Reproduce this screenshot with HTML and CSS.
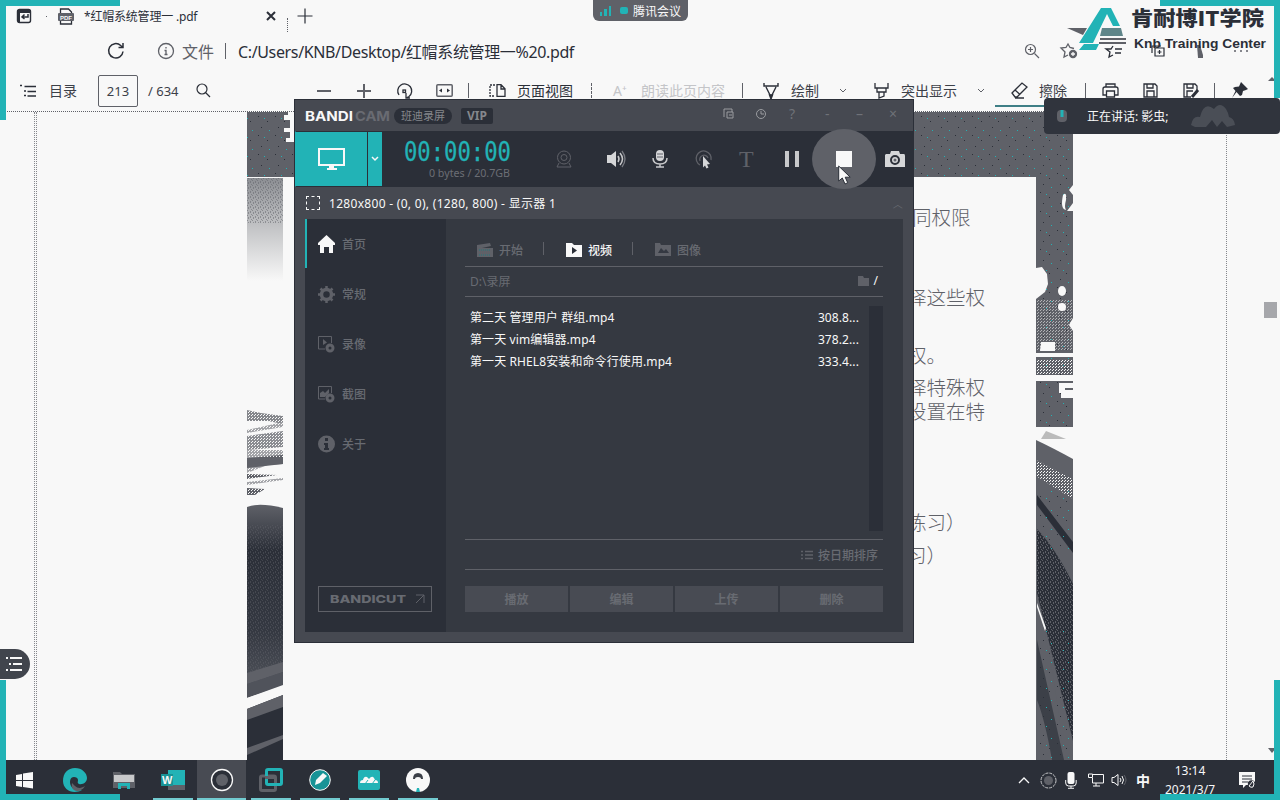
FILE: index.html
```html
<!DOCTYPE html>
<html lang="zh-CN">
<head>
<meta charset="utf-8">
<title>红帽系统管理一 .pdf</title>
<link rel="stylesheet" href="styles.css">
</head>
<body>
<div class="desktop">
  <header class="tabs">
    <svg width="16" height="16" viewBox="0 0 16 16"><rect x="1.500" y="1.500" width="13" height="13" rx="2" fill="none" stroke="#2b2f38" stroke-width="1.400"/><path d="M1 2h14v3H4v10H2z" fill="#2b2f38"/><path d="M12 6v3H6m2.500-2.500L6 9l2.500 2" fill="none" stroke="#2b2f38" stroke-width="1.500"/></svg>
    <i class="speck"></i>
    <svg width="16" height="17" viewBox="0 0 16 17"><path d="M2.500 5V1h8l3 3v1M2.500 13v3h11v-3" fill="none" stroke="#2b2f38" stroke-width="1.300"/><rect y="5" width="16" height="8" rx="1" fill="#5f6168"/><text x="2" y="11.500" class="pdf-tag">PDF</text></svg>
    <span class="tab-title">*红帽系统管理一 .pdf</span>
    <svg width="10" height="10" viewBox="0 0 10 10"><path d="M1 1l8 8M9 1L1 9" stroke="#2b2f38" stroke-width="2"/></svg>
    <i class="tab-edge"></i>
    <svg width="16" height="16" viewBox="0 0 16 16"><path d="M8 .500v15M.500 8h15" stroke="#2b2f38" stroke-width="1.200"/></svg>
  </header>

  <div class="address">
    <svg width="18" height="18" viewBox="0 0 18 18" fill="none" stroke="#2b2f38" stroke-width="1.500"><path d="M16 9.500A7.200 7.200 0 1 1 13.700 3.500L16 5.500M16 1v4.500h-4.500"/></svg>
    <svg width="18" height="18" viewBox="0 0 18 18" fill="none" stroke="#5f6168" stroke-width="1.300"><circle cx="9" cy="9" r="7.500"/><path d="M9 5v1.500M7.500 8.500H9v4m-1.500 0h3"/></svg>
    <span class="scheme">文件</span>
    <i class="bar"></i>
    <span class="url">C:/Users/KNB/Desktop/红帽系统管理一%20.pdf</span>
    <svg width="16" height="16" viewBox="0 0 16 16" fill="none" stroke="#5f6168" stroke-width="1.200"><circle cx="6.500" cy="6.500" r="5"/><path d="M4 6.500h5M6.500 4v5M10.500 10.500L15 15"/></svg>
    <svg width="18" height="16" viewBox="0 0 18 16" fill="none" stroke="#5f6168" stroke-width="1.300"><path d="M8 12l-4 2 1-5-4-4 5-.5L8 1l2 3.500 4 1"/><circle cx="13" cy="11" r="3.500" fill="#5f6168"/><path d="M11 11h4m-2-2v4" stroke="#f8f8f8"/></svg>
    <svg width="18" height="16" viewBox="0 0 18 16" fill="none" stroke="#2b2f38" stroke-width="1.300"><path d="M8 3L6 6 1 6l4 3-1 5 4-2M10 6h7M10 10h6"/></svg>
    <svg width="16" height="16" viewBox="0 0 16 16" fill="none" stroke="#2b2f38" stroke-width="1.200"><path d="M2 10V3h9M5 5h9v8H5zM9.500 7v4M7.500 9h4"/></svg>
    <svg width="10" height="16" viewBox="0 0 10 16"><path d="M2 2h3l3 10v3H3z" fill="#5f6168"/></svg>
    <svg width="16" height="6" viewBox="0 0 16 6" fill="#5f6168"><circle cx="2" cy="3" r="1"/><circle cx="8" cy="3" r="1"/><circle cx="14" cy="3" r="1"/></svg>
  </div>

  <div class="pdfbar">
    <svg width="17" height="14" viewBox="0 0 17 14" stroke="#2b2f38" stroke-width="1.400"><path d="M0 1.500h2M4.500 2.500H16M4 7h2M7.500 7.500H16M4 11.500h2M7.500 12H16"/></svg>
    <span>目录</span>
    <span class="page-box">213</span>
    <span class="total">/ 634</span>
    <svg width="15" height="15" viewBox="0 0 15 15" fill="none" stroke="#2b2f38" stroke-width="1.200"><circle cx="6" cy="6" r="5"/><path d="M9.500 9.500L14 14"/></svg>
    <svg width="14" height="14" viewBox="0 0 14 14"><path d="M0 7h14" stroke="#5f6168" stroke-width="2"/></svg>
    <svg width="14" height="14" viewBox="0 0 14 14"><path d="M0 7h14M7 0v14" stroke="#5f6168" stroke-width="2"/></svg>
    <svg width="17" height="18" viewBox="0 0 17 18" fill="none" stroke="#2b2f38" stroke-width="1.300"><path d="M3 13A7 7 0 1 1 13 14.500l-2 1M10 11v5h4"/><rect x="7" y="8" width="2.500" height="2.500"/></svg>
    <svg width="17" height="13" viewBox="0 0 17 13"><rect x=".8" y=".8" width="15.400" height="11.400" rx="1" fill="none" stroke="#5f6168" stroke-width="1.500"/><path d="M3 6.500l3-2v4zM14 6.500l-3-2v4z" fill="#2b2f38"/></svg>
    <i class="sep"></i>
    <svg width="17" height="13" viewBox="0 0 17 13" fill="none" stroke="#2b2f38" stroke-width="1.300"><path d="M6 1H1v11h5" stroke-dasharray="2 1"/><path d="M8 .7h4l4 4v7.600H8zM12 1v4h4"/></svg>
    <span class="dark">页面视图</span>
    <i class="sep dashed"></i>
    <span class="faint">A⁺</span>
    <span class="faint">朗读此页内容</span>
    <i class="sep"></i>
    <svg width="16" height="16" viewBox="0 0 16 16" fill="none" stroke="#2b2f38" stroke-width="1.400"><path d="M1 0v3h14V0M3 4l5 10 5-10"/><path d="M6.500 12h3L8 16z" fill="#2b2f38"/></svg>
    <span>绘制</span>
    <svg width="8" height="6" viewBox="0 0 8 6"><path d="M1 1l3 3 3-3" fill="none" stroke="#5f6168"/></svg>
    <svg width="15" height="16" viewBox="0 0 15 16" fill="none" stroke="#2b2f38" stroke-width="1.300"><path d="M1 0v5h13V0M3 5v4h9V5M5 9v6l5-2V9"/></svg>
    <span>突出显示</span>
    <svg width="8" height="6" viewBox="0 0 8 6"><path d="M1 1l3 3 3-3" fill="none" stroke="#5f6168"/></svg>
    <svg width="17" height="17" viewBox="0 0 17 17" fill="none" stroke="#2b2f38" stroke-width="1.300"><path d="M1 11L11 1l5 4L6 15H4zM4 8l5 4.500M4 16h9"/></svg>
    <span class="erase">擦除</span>
    <i class="sep"></i>
    <svg width="17" height="15" viewBox="0 0 17 15" fill="none" stroke="#2b2f38" stroke-width="1.300"><path d="M4 4V1h9v3M4 12H1V6q0-2 2-2h11q2 0 2 2v6h-3M4.500 8h8v6h-8z"/></svg>
    <svg width="15" height="15" viewBox="0 0 15 15" fill="none" stroke="#2b2f38" stroke-width="1.300"><path d="M1 1h11l2 2v11H1zM4 1v4h6V1M4 14V8h7v6"/></svg>
    <svg width="16" height="15" viewBox="0 0 16 15" fill="none" stroke="#2b2f38" stroke-width="1.300"><path d="M8 14H1V1h11l2 2v4M4 1v4h6V1M4 14V8h6"/><path d="M9 14l6-7" stroke-width="3"/></svg>
    <i class="sep"></i>
    <svg width="16" height="17" viewBox="0 0 16 17" fill="#2b2f38"><path d="M9 0l7 7-2 1-3 1-1 4-2 1-3.500-4L0 16l3.500-7L1 6l2-1 4-.5z"/></svg>
  </div>
  <i class="erase-line"></i>

  <main class="viewer">
    <i class="side-line"></i>
    <section class="doc">
      <svg class="photo" width="826" height="648" viewBox="247 112 826 648">
        <defs>
          <pattern id="spark" width="17" height="19" patternUnits="userSpaceOnUse"><path d="M3 2h1v1H3zM12 7h1v1h-1zM6 13h1v1H6z" fill="#2b2f38"/><path d="M9 4h1v1H9zM14 16h1v1h-1z" fill="#22b3b6"/></pattern>
          <pattern id="dots" width="3" height="3" patternUnits="userSpaceOnUse"><path d="M0 0h1v1H0zM2 1h1v1H2z" fill="#f8f8f8"/></pattern>
          <pattern id="grain" width="5" height="5" patternUnits="userSpaceOnUse"><path d="M0 1h1v2H0zM2 0h1v1H2zM3 2h1v2H3zM1 4h1v1H1z" fill="#5f6168"/></pattern>
          <linearGradient id="fade" x1="0" y1="0" x2="0" y2="1"><stop offset="0" stop-color="#8c8e93"/><stop offset=".5" stop-color="#c5c6c8"/><stop offset="1" stop-color="#f8f8f8"/></linearGradient>
          <linearGradient id="floor" x1="0" y1="0" x2="0" y2="1"><stop offset="0" stop-color="#5f6168"/><stop offset=".25" stop-color="#2b2f38"/><stop offset=".7" stop-color="#353942"/><stop offset="1" stop-color="#50535b"/></linearGradient>
        </defs>
        <path d="M247 112h826v65H247z" fill="#5f6168"/><path d="M247 112h826v65H247z" fill="url(#spark)"/>
        <path d="M288 112h8v30h-10v-4h4v-6h-6v-4h6v-8h-6v-5h4z" fill="#f8f8f8"/>
        <path d="M247 178h36v103h-36z" fill="url(#fade)"/><path d="M247 178h36v45h-36z" fill="url(#grain)" opacity=".5"/>
        <path d="M247 353l14 3 22 3v8l-15-3-21 0z" fill="#85878c" transform="translate(0 57) scale(1 1)"/>
        <path d="M247 381l36-8v5l-36 6z" fill="#a3a4a8" transform="translate(0 49)"/>
        <path d="M247 436l36-5v10l-36 2z" fill="#8b8d92"/>
        <path d="M247 441l36-2v8l-36 3z" fill="#8b8d92"/><path d="M247 450l36 0v9l-36 14z" fill="#a3a4a8"/><path d="M247 458l36-3v9l-36 2z" fill="#5f6168"/>
        <path d="M247 482l36-4v2l-36 5z" fill="#a3a4a8"/><path d="M247 474l30 1-30 4zM247 488l18 1-10 6h-8z" fill="#5f6168"/><path d="M247 410h36v47h-36zM247 467h36v36h-36z" fill="url(#dots)"/>
        <path d="M247 507q12-5 36 1v167l-36 12z" fill="url(#floor)"/><path d="M247 525h36v150l-36 10z" fill="url(#grain)" opacity=".45"/>
        <path d="M247 465l36-6v5l-36 4zM247 673l36-11v10l-36 12z" fill="#5f6168"/><path d="M247 684l36-12v14l-36 12z" fill="#50535b"/>
        <path d="M247 698l36-13v10l-36 14z" fill="#f8f8f8"/><path d="M247 709l36-14v65h-36z" fill="#2b2f38"/><path d="M247 709l36-14v12l-36 13zM247 748l36-13v4l-36 16z" fill="#5f6168"/>
        <path d="M1036 177h37v250h-37z" fill="#5f6168"/><path d="M1036 177h37v250h-37z" fill="url(#spark)"/>
        <path d="M1063 195q4-4 3 5-2 7 0 10-6-1-3-15zM1073 185l-4 5 4 5zM1073 203l-6 8h6z" fill="#f8f8f8"/>
        <path d="M1036 268l6-1 5 7 1 10-3 8-9 7z" fill="#f8f8f8"/><ellipse cx="1062" cy="291" rx="4" ry="5" fill="#f8f8f8"/><ellipse cx="1062" cy="307" rx="4" ry="4" fill="#f8f8f8"/><path d="M1036 300h37v50h-37z" fill="url(#dots)" opacity=".55"/>
        <path d="M1041 342h14v9h-15zM1036 353h37v4h-37zM1036 375h37v6h-37zM1073 318l-4 7 4 6z" fill="#f8f8f8"/><path d="M1036 359h37v16h-37z" fill="url(#dots)"/><path d="M1059 383h14v5h-8v2h8v8h-12v-5h-2z" fill="#f8f8f8"/>
        <path d="M1036 427h37v333h-37z" fill="#f8f8f8"/><path d="M1046 431l20 8h-25z" fill="#bbb"/><path d="M1036 440q17 8 37 19v301h-37z" fill="#5f6168"/>
        <path d="M1037 495l36 47v11l-36-48zM1037 529q19 20 36 55v157q-18-75-36-148z" fill="#2b2f38"/><path d="M1037 529q19 20 36 55v157q-18-75-36-148z" fill="url(#grain)"/>
        <path d="M1037 605q17 55 27 155h-27z" fill="#5f6168"/><path d="M1037 640l27 120h-12q-7-40-15-60z" fill="#3c4048"/><path d="M1036 460l37 19v20l-37-23z" fill="url(#dots)"/><path d="M1037 603l9 25-1 3-8-24z" fill="#f8f8f8"/><path d="M1037 490h36v60h-36zM1037 630h36v130h-36z" fill="url(#spark)"/>
        <path d="M284 177h752v583H284z" fill="#f8f8f8"/>
      </svg>
      <div class="doc-text"><p class="r1">同权限</p><p class="r2">择这些权</p><p class="r3">权。</p><p class="r4">择特殊权</p><p class="r5">设置在特</p><p class="r6">练习）</p><p class="r7">习）</p></div>
    </section>
    <i class="side-line"></i>
    <div class="scroll"><i class="thumb"></i><i class="down"></i></div>
  </main>

  <footer class="taskbar">
    <div class="apps">
      <span class="start"><svg width="17" height="17" viewBox="0 0 17 17" fill="#f8f8f8"><path d="M0 3l6-1v6H0zM7 1.500L17 0v8H7zM0 9h6v6l-6-1zM7 9h10v7.500L7 15z"/></svg></span>
      <span><svg width="24" height="24" viewBox="0 0 24 24"><path d="M0 13C0 5 5 0 12 0s12 5 12 10c0 4-4 7-8 6-2-1-1-2-1-4 0-2-2-3-4-3-4 0-5 5-3 9 2 4 7 5 11 4-9 5-19 0-19-9z" fill="#22b3b6"/><path d="M12 18c3 3 7 2 10 0-2 4-6 5-8 5-4 0-6-4-5-8z" fill="#5f6168"/></svg></span>
      <span><svg width="22" height="18" viewBox="0 0 22 18"><path d="M0 1h7l2 2h13v14H0z" fill="#5f6168"/><path d="M1 4h20v7H1z" fill="#c8c9cb"/><path d="M5 18v-6h12v6h-3v-3H8v3z" fill="#22b3b6"/></svg></span>
      <span class="open"><svg width="24" height="22" viewBox="0 0 24 22"><path d="M7 1h17v16H7z" fill="#22b3b6"/><path d="M7 12h17v9H7z" fill="#5f6168"/><path d="M12 12h12v4H12z" fill="#22b3b6"/><path d="M0 5h12v12H0z" fill="#189396"/><text x="1" y="15" class="word">W</text></svg></span>
      <span class="open active"><svg width="24" height="24" viewBox="0 0 24 24"><circle cx="12" cy="12" r="10.500" fill="#2b2f38" stroke="#f8f8f8" stroke-width="1.300"/><circle cx="12" cy="12" r="6" fill="#5f6168"/></svg></span>
      <span class="open"><svg width="24" height="24" viewBox="0 0 24 24" fill="none" stroke-width="3"><rect x="1.500" y="8" width="15" height="14.500" rx="1.500" stroke="#5f6168"/><rect x="7.500" y="1.500" width="15" height="15" rx="1.500" stroke="#22b3b6"/><path d="M6 9.500h9" stroke="#5f6168"/></svg></span>
      <span class="open"><svg width="22" height="22" viewBox="0 0 22 22"><circle cx="11" cy="11" r="10.300" fill="#189396" stroke="#f8f8f8"/><path d="M6 16l1-5 7-7 4 3-7 7z" fill="#f8f8f8"/></svg></span>
      <span class="open"><svg width="22" height="20" viewBox="0 0 22 20"><rect width="22" height="20" rx="2" fill="#22b3b6"/><path d="M2 13q0-3 3-3 1-4 4-3l2 2q3-4 5-1l1 2q3 0 3 3z" fill="#f8f8f8"/><path d="M7 14l3-4M14 14l3-4" stroke="#22b3b6"/></svg></span>
      <span class="open"><svg width="24" height="24" viewBox="0 0 24 24"><circle cx="12" cy="12" r="12" fill="#f8f8f8"/><path d="M7 11q0-6 5-6t5 6z" fill="#3c4048"/><path d="M9 11q0-2 3-2t3 2z" fill="#f8f8f8"/><path d="M11 20h2l1 4h-4z" fill="#22b3b6"/></svg></span>
    </div>
    <div class="tray">
      <svg width="12" height="8" viewBox="0 0 12 8"><path d="M1 7l5-5 5 5" fill="none" stroke="#f8f8f8" stroke-width="1.300"/></svg>
      <svg width="17" height="17" viewBox="0 0 17 17"><circle cx="8.500" cy="8.500" r="7.500" fill="none" stroke="#c8c9cb" stroke-dasharray="3 1"/><circle cx="8.500" cy="8.500" r="4.500" fill="#5f6168"/></svg>
      <svg width="12" height="17" viewBox="0 0 12 17"><rect x="2.500" width="7" height="12" rx="2" fill="#f8f8f8"/><path d="M.7 8v3q0 3 3 3h4.500q3 0 3-3V8M6 14v2M3 16.300h6" fill="none" stroke="#f8f8f8"/></svg>
      <svg width="17" height="14" viewBox="0 0 17 14" fill="none" stroke="#f8f8f8"><path d="M4.500 1.500h11v8.500h-11V5M8 10v3M5 13h7M.5 1h4v3.500h-4z"/></svg>
      <svg width="17" height="14" viewBox="0 0 17 14" fill="none" stroke="#f8f8f8"><path d="M1 4.500h2l4-3v11l-4-3H1zM9 5q2 2 0 4M11 3q3 4 0 8"/><path d="M13 2q4 5 0 10" stroke="#5f6168"/></svg>
      <b class="ime">中</b>
      <span class="clock">13:14<br>2021/3/7</span>
      <svg width="17" height="17" viewBox="0 0 17 17"><path d="M0 0h16v13H7l-3 3v-3H0z" fill="#f8f8f8"/><path d="M3 4h10M3 7h10M3 10h6" stroke="#2b2f38"/><circle cx="12.500" cy="12" r="3.700" fill="#2b2f38"/><path d="M10 14l4-5q2 3 0 6-2 1-4-1z" fill="none" stroke="#f8f8f8"/></svg>
    </div>
  </footer>
</div>

<div class="bandicam">
  <div class="b-title">
    <svg width="88" height="20" viewBox="0 0 88 20"><text x="0" y="15" class="brand" textLength="48" lengthAdjust="spacingAndGlyphs">BANDI</text><text x="50" y="15" class="brand dim" textLength="35" lengthAdjust="spacingAndGlyphs">CAM</text></svg>
    <span class="pill">班迪录屏</span><span class="vip">VIP</span>
    <div class="b-controls">
      <svg width="12" height="12" viewBox="0 0 12 12" fill="none" stroke="#9a9ca0"><path d="M1 9V1h8v3M4 4h6v6H4zM6 7h3"/></svg>
      <svg width="12" height="12" viewBox="0 0 12 12" fill="none" stroke="#9a9ca0"><circle cx="6" cy="6" r="4.500"/><path d="M6 3v3h3"/></svg>
      <span>?</span><span>-</span><span>–</span><span>×</span>
    </div>
  </div>
  <div class="b-tools">
    <div class="screen"><svg width="28" height="24" viewBox="0 0 28 24"><path d="M1 2h25v16H1z" fill="none" stroke="#f8f8f8" stroke-width="2"/><path d="M11 18h5v3h3v2H9v-2h2z" fill="#f8f8f8"/></svg></div>
    <div class="drop"><svg width="8" height="6" viewBox="0 0 8 6"><path d="M1 1l3 3 3-3" fill="none" stroke="#f8f8f8" stroke-width="1.500"/></svg></div>
    <svg class="timer" width="112" height="50" viewBox="0 0 112 50"><text x="0" y="25" class="digits" textLength="107" lengthAdjust="spacingAndGlyphs">00:00:00</text><text x="25" y="41" class="bytes" textLength="81" lengthAdjust="spacingAndGlyphs">0 bytes / 20.7GB</text></svg>
    <div class="b-icons">
      <svg width="18" height="18" viewBox="0 0 18 18" fill="none" stroke="#5f6168"><circle cx="9" cy="7.500" r="6.500"/><circle cx="9" cy="7.500" r="3"/><path d="M4 13l-2 4h14l-2-4"/></svg>
      <svg width="20" height="18" viewBox="0 0 20 18"><path d="M0 5h4l5-4v16l-5-4H0z" fill="#d5d6d8"/><path d="M11 6q2 3 0 6M13 3q5 6 0 12" fill="none" stroke="#c8c9cb" stroke-width="1.500"/><path d="M15 1q6 8 0 16" fill="none" stroke="#777980" stroke-width="1.300"/></svg>
      <svg width="16" height="18" viewBox="0 0 16 18"><rect x="4" width="8" height="11" rx="4" fill="#d5d6d8"/><path d="M5 4h6M5 7h6" stroke="#5f6168"/><path d="M1 8q0 6 7 6t7-6M8 14v3M4 17h8" fill="none" stroke="#c8c9cb" stroke-width="1.500"/></svg>
      <svg width="18" height="19" viewBox="0 0 18 19"><path d="M5 15A7.500 7.500 0 1 1 16 10M5 11a4 4 0 1 1 8-3" fill="none" stroke="#5f6168" stroke-width="1.300"/><path d="M8 6l7 8-3 .5 1.500 3-2 1-1.500-3-2 2z" fill="#d5d6d8"/></svg>
      <span class="letter-t">T</span>
      <svg width="14" height="16" viewBox="0 0 14 16" fill="#c8c9cb"><path d="M0 0h4v16H0zM10 0h4v16h-4z"/></svg>
      <span class="record"><i></i></span>
      <svg width="20" height="16" viewBox="0 0 20 16"><path d="M1 3h4l1-3h8l1 3h4q1 0 1 2v11H0V4z" fill="#d5d6d8"/><circle cx="10" cy="9" r="4" fill="#d5d6d8" stroke="#2b2f38" stroke-width="2"/><circle cx="10" cy="9" r="1.500" fill="#5f6168"/></svg>
    </div>
  </div>
  <div class="b-info"><i class="area"></i><span>1280x800 - (0, 0), (1280, 800) - 显示器 1</span><small>︿</small></div>
  <div class="b-body">
    <nav class="side">
      <div class="item on"><svg width="17" height="18" viewBox="0 0 17 18"><path d="M8.500 0L17 8v2h-2v8h-4v-6H6v6H2v-8H0V8z" fill="#f8f8f8"/></svg>首页</div>
      <div class="item"><svg width="17" height="17" viewBox="0 0 17 17"><circle cx="8.500" cy="8.500" r="5" fill="none" stroke="#5f6168" stroke-width="3.500"/><path d="M8.500 0v3M8.500 14v3M0 8.500h3M14 8.500h3M2.500 2.500l2 2M12.500 12.500l2 2M2.500 14.500l2-2M12.500 4.500l2-2" stroke="#5f6168" stroke-width="2.500"/></svg>常规</div>
      <div class="item"><svg width="17" height="17" viewBox="0 0 17 17"><path d="M7 13H.5V.5h13V7" fill="none" stroke="#5f6168"/><path d="M5 3l4 3.500L5 9z" fill="#5f6168"/><circle cx="12" cy="12" r="3" fill="none" stroke="#5f6168" stroke-width="3"/></svg>录像</div>
      <div class="item"><svg width="17" height="17" viewBox="0 0 17 17"><path d="M7 13H.5V.5h13V7" fill="none" stroke="#5f6168"/><path d="M2 11V7l3-2 2 2 4-4v4L7 11z" fill="#5f6168"/><circle cx="12" cy="12" r="3" fill="none" stroke="#5f6168" stroke-width="3"/></svg>截图</div>
      <div class="item"><svg width="17" height="18" viewBox="0 0 17 18"><circle cx="8.500" cy="9" r="8.500" fill="#5f6168"/><path d="M7 3h3v3H7zM6 8h4v5h1v2H6v-2h1v-3H6z" fill="#2b2f38"/></svg>关于</div>
      <div class="bandicut"><svg width="96" height="14" viewBox="0 0 96 14"><text x="0" y="11" class="cut" textLength="76" lengthAdjust="spacingAndGlyphs">BANDICUT</text><path d="M86 3h8v8M94 3l-8 8" fill="none" stroke="#5f6168"/></svg></div>
    </nav>
    <section class="panel">
      <div class="ptabs">
        <span><svg width="16" height="14" viewBox="0 0 16 14"><path d="M0 2l13-2 1 3-9 2h11v9H0z" fill="#5f6168"/><path d="M2 7h12M2 12h12" stroke="#22787d" stroke-dasharray="1 1"/></svg>开始</span><i></i>
        <span class="sel"><svg width="16" height="14" viewBox="0 0 16 14"><path d="M0 0h6l2 2h8v12H0z" fill="#f8f8f8"/><path d="M6 4l5 3.500L6 11z" fill="#2b2f38"/></svg>视频</span><i></i>
        <span><svg width="16" height="13" viewBox="0 0 16 13"><path d="M0 0h5l1 2h10v11H0z" fill="#5f6168"/><path d="M3 10l3-5 3 3 2-2 3 4z" fill="#353942"/></svg>图像</span>
      </div>
      <div class="path"><span>D:\录屏</span><em><svg width="11" height="10" viewBox="0 0 11 10"><path d="M0 0h5l1 2h5v8H0z" fill="#5f6168"/></svg><b>/</b></em></div>
      <div class="files">
        <div class="rows">
          <div><span>第二天 管理用户 群组.mp4</span><span>308.8...</span></div>
          <div><span>第一天 vim编辑器.mp4</span><span>378.2...</span></div>
          <div><span>第一天 RHEL8安装和命令行使用.mp4</span><span>333.4...</span></div>
        </div>
        <i class="track"></i>
      </div>
      <div class="sort"><svg width="12" height="10" viewBox="0 0 12 10" stroke="#5f6168" stroke-width="1.600"><path d="M0 1.500h2M4 1.500h8M0 5h2M4 5h8M0 8.500h2M4 8.500h8"/></svg>按日期排序</div>
      <div class="buttons"><span>播放</span><span>编辑</span><span>上传</span><span>删除</span></div>
    </section>
  </div>
</div>
<svg class="cursor" width="14" height="20" viewBox="0 0 14 20"><path d="M.7 1v15l3.600-3 2.700 6 2.700-1.300-2.500-5.500h5z" fill="#f8f8f8" stroke="#2b2f38"/></svg>

<div class="meeting"><svg width="12" height="10" viewBox="0 0 12 10" fill="#22b3b6"><path d="M0 6h2v4H0zM4 3h3v7H4zM9 0h2v10H9z"/></svg><i></i><span>腾讯会议</span></div>
<div class="speaking"><svg width="10" height="14" viewBox="0 0 10 14"><rect width="10" height="12" y="1" rx="4" fill="#5f6168"/><path d="M5 1v7" stroke="#22b3b6" stroke-width="3"/></svg><span>正在讲话: 影虫;</span><svg width="44" height="22" viewBox="0 0 44 22"><path d="M0 20Q2 10 9 12q4-16 14-8 6-8 12 0 2 3 3 8 5 1 6 8l-8 2-5-6-5 6-5-7-6 7H4z" fill="#4a4e56"/></svg></div>

<div class="knb">
  <svg width="60" height="44" viewBox="0 0 60 44"><path d="M0 20h20l-4 7z" fill="#5f6168"/><path d="M34 0h10l9 18h-7l-6-12-14 29H12zM17 36h15l-3 6H12z" fill="#22b3b6"/><path d="M35 20h19l2 8H33z" fill="#5f8589"/><path d="M33 31h26M32 35h27" stroke="#5f6168" stroke-width="2"/></svg>
  <svg width="140" height="46" viewBox="0 0 140 46"><text x="0" y="18" class="knb-cn" textLength="133" lengthAdjust="spacingAndGlyphs">肯耐博IT学院</text><text x="3" y="40" class="knb-en" textLength="132" lengthAdjust="spacingAndGlyphs">Knb Training Center</text></svg>
</div>
<div class="toc"><svg width="17" height="14" viewBox="0 0 17 14" stroke="#f8f8f8" stroke-width="2"><path d="M0 1h2M4 1h12M3 7h2M7 7h9M0 13h2M4 13h12"/></svg></div>
<i class="up"></i>
<i class="corner tl"></i><i class="corner tr"></i><i class="corner bl"></i><i class="corner br"></i>
</body>
</html>
```

FILE: styles.css
```css
* { box-sizing: border-box; }
body { margin: 0; width: 1280px; height: 800px; overflow: hidden; position: relative; background: #f8f8f8; color: #5f6168; font: 14px "Noto Sans", "Noto Sans CJK SC", sans-serif; }
svg { display: block; overflow: visible; flex: none; }
i, em { font-style: normal; display: block; }
span, p { white-space: nowrap; }
.desktop { width: 1280px; height: 800px; display: flex; flex-direction: column; }

/* Browser chrome */
.tabs { height: 32px; display: grid; grid-template-columns: 30px 12px 26px 182px 21px 10px 20px; align-items: center; padding-left: 16px; }
.speck { width: 1px; height: 1px; background: #5f6168; }
.tab-title { font-size: 12px; color: #2b2f38; letter-spacing: -.2px; }
.pdf-tag { font: bold 6px "Liberation Sans", sans-serif; fill: #f8f8f8; }
.tab-edge { height: 14px; border-left: 1px dotted #5f6168; align-self: end; }
.address { height: 38px; display: grid; grid-template-columns: 50px 25px 43px 13px 786px 36px 45px 45px 45px 38px 20px; align-items: center; padding-left: 107px; }
.scheme { font-size: 16px; }
.bar { width: 1px; height: 16px; background: #5f6168; }
.url { font-size: 16px; color: #2b2f38; letter-spacing: -.36px; }
.pdfbar { height: 42px; padding-left: 20px; display: grid; grid-template-columns: 29px 49px 50px 48px 121px 40px 39px 40px 32px 21px 28px 74px 22px 28px 101px 21px 28px 48px 35px 27px 76px 34px 28px 46px 17px 41px 40px 31px 18px 28px; align-items: center; border-bottom: 1px dotted #5f6168; color: #3c4048; line-height: 18px; }
.page-box { width: 40px; height: 32px; border: 1px solid #5f6168; border-radius: 2px; display: grid; place-items: center; font-size: 13px; }
.total { font-size: 13px; }
.dark { color: #2b2f38; }
.faint { color: #c4c5c8; }
.sep { width: 1px; height: 15px; background: #5f6168; }
.dashed { background: none; border-left: 1px dashed #5f6168; }
.erase-line { position: absolute; left: 995px; top: 105px; width: 88px; height: 2px; background: #3f7f86; }

/* Document */
.viewer { height: 648px; display: flex; }
.side-line { width: 3px; margin-left: 34px; border-left: 1px dotted #85878c; border-right: 1px dotted #85878c; }
.side-line + .doc { margin-left: 210px; }
.doc { width: 826px; height: 648px; display: grid; }
.doc > * { grid-area: 1 / 1; }
.doc + .side-line { margin-left: 153px; border-right: 0; }
.doc-text { position: relative; margin-left: 660px; padding-top: 93px; font: 300 19.5px/24px "Noto Sans CJK SC", sans-serif; }
.doc-text p { margin: 0; height: 24px; }
.doc-text .r1 { height: 80px; padding-left: 5px; }
.doc-text .r2 { height: 58px; }
.doc-text .r3 { height: 32px; }
.doc-text .r4 { height: 24px; }
.doc-text .r5 { height: 111px; }
.doc-text .r6 { height: 33px; }
.scroll { width: 14px; margin-left: 35px; display: flex; flex-direction: column; }
.thumb { width: 13px; height: 16px; margin-top: 190px; background: #a6a7ab; }
.down { border: 4px solid transparent; border-top: 5px solid #5f6168; margin: 430px 0 0 4px; width: 8px; }
.up { position: absolute; left: 1268px; top: 77px; border: 4px solid transparent; border-top: 0; border-bottom: 4px solid #5f6168; }

/* Taskbar */
.taskbar { height: 40px; background: #2b2f38; display: flex; color: #f8f8f8; }
.apps { display: flex; }
.apps span { width: 49px; height: 40px; display: grid; place-items: center; position: relative; }
.apps .start { width: 50px; padding-right: 2px; }
.open::after { content: ""; position: absolute; left: 5px; right: 4px; bottom: 0; height: 2px; background: #72cbd0; }
.apps .active { background: #484b53; }
.active::after { left: 0; right: 0; }
.word { font: bold 11px "Liberation Sans", sans-serif; fill: #f8f8f8; }
.tray { margin-left: 576px; display: grid; grid-template-columns: 22px 25px 23px 23px 25px 28px 75px 20px; align-items: center; }
.ime { font-size: 14px; font-weight: 700; }
.clock { font-size: 12px; line-height: 19px; width: 52px; text-align: center; height: 38px; }

/* Recorder window */
.bandicam { position: absolute; left: 294px; top: 99px; width: 620px; height: 544px; background: #464951; border: 1px solid #2b2f38; font-size: 12px; display: flex; flex-direction: column; }
.b-title { height: 31px; display: flex; align-items: center; padding-left: 10px; flex: none; }
.brand { font: 700 13px Inter, sans-serif; fill: #f8f8f8; }
.dim { fill: #696b72; }
.pill, .vip { height: 16px; line-height: 15px; background: #2b2f38; color: #85878c; font-size: 11px; }
.pill { margin-left: 1px; width: 58px; border-radius: 8px; padding-left: 7px; }
.vip { margin-left: 9px; width: 32px; text-align: center; font-weight: 700; font-size: 12px; border-radius: 2px; }
.b-controls { margin-left: 230px; display: grid; grid-template-columns: 32px 34px 36px 31px 33px 12px; align-items: center; color: #6f7278; font-size: 14px; padding-bottom: 4px; }
.b-tools { height: 56px; background: #2b2f38; display: flex; flex: none; }
.screen { width: 72px; background: #22b3b6; display: grid; place-items: center; border: 1px solid #2b2f38; border-left-color: #22b3b6; border-right-width: 0; }
.drop { width: 15px; border: solid #2b2f38; border-width: 1px 0 1px 1px; background: #22b3b6; display: grid; place-items: center; }
.timer { margin: 5px 0 0 22px; }
.digits { font: 26px "DejaVu Sans Mono", monospace; fill: #22b3b6; stroke: #22b3b6; stroke-width: .3px; }
.bytes { font: 11px "Noto Sans", sans-serif; fill: #6b6e75; }
.b-icons { margin-left: 39px; display: grid; grid-template-columns: 52px 45px 43px 44px 46px 27px 73px 20px; grid-template-rows: 56px; align-items: center; }
.letter-t { font: 24px/24px "Liberation Serif", serif; }
.record { width: 64px; height: 60px; border-radius: 50%; background: #5f6168; display: grid; place-items: center; }
.record i { width: 16px; height: 16px; background: #f8f8f8; }
.b-info { height: 32px; display: flex; align-items: center; color: #f8f8f8; padding: 0 10px 0 11px; gap: 9px; flex: none; letter-spacing: .3px; }
.b-info small { margin-left: auto; color: #696b72; }
.area { width: 14px; height: 14px; border: 1px dashed #f8f8f8; }
.b-body { display: flex; height: 413px; margin: 0 10px; background: #353941; }
.side { width: 141px; background: #2b2f38; display: flex; flex-direction: column; font-weight: 500; }
.item { height: 50px; display: flex; align-items: center; gap: 7px; padding-left: 11px; border-left: 2px solid transparent; color: #686b72; }
.on { height: 49px; border-color: #22b3b6; margin-bottom: 1px; }
.bandicut { width: 114px; height: 26px; margin: 117px 0 0 13px; border: 1px solid #5f6168; padding: 5px 0 0 11px; }
.cut { font: 800 11px Inter, sans-serif; fill: #686b72; }
.panel { width: 418px; margin-left: 19px; }
.ptabs { height: 48px; display: flex; padding: 14px 0 0 12px; border-bottom: 1px solid #5f6168; }
.ptabs span { display: flex; height: 34px; padding-bottom: 1px; align-items: center; gap: 6px; color: #686b72; font-weight: 500; }
.ptabs .sel { color: #f8f8f8; }
.ptabs i { width: 1px; height: 13px; margin: 9px 22px 0 20px; background: #5f6168; }
.path { height: 30px; border-bottom: 1px solid #5f6168; display: flex; justify-content: space-between; align-items: center; padding: 0 5px 2px; color: #686b72; }
.path em { display: flex; align-items: center; gap: 5px; }
.path b { color: #f8f8f8; font-weight: 400; }
.files { height: 243px; border-bottom: 1px solid #5f6168; padding: 9px 0 8px; display: flex; color: #f8f8f8; }
.rows { width: 404px; padding: 0 10px 0 5px; letter-spacing: .1px; }
.rows div { height: 22px; display: flex; justify-content: space-between; align-items: center; }
.track { width: 14px; background: #2b2f38; }
.sort { height: 30px; border-bottom: 1px solid #5f6168; display: flex; align-items: center; justify-content: flex-end; gap: 5px; padding-right: 5px; color: #686b72; font-weight: 500; }
.buttons { display: grid; grid-template-columns: repeat(4, 1fr); gap: 2px; margin-top: 16px; }
.buttons span { height: 26px; background: #484b53; display: grid; place-items: center; color: #686b72; font-weight: 700; }
.cursor { position: absolute; left: 838px; top: 165px; }

/* Overlays */
.meeting { position: absolute; left: 593px; top: 0; width: 95px; height: 21px; border-radius: 0 0 6px 6px; background: #5f6168; display: flex; align-items: center; padding-left: 7px; gap: 8px; color: #f8f8f8; font-size: 12px; }
.meeting i { width: 8px; height: 7px; border-radius: 2px; background: #22b3b6; }
.meeting span { margin-left: -3px; }
.speaking { position: absolute; left: 1044px; top: 98px; width: 236px; height: 36px; border-radius: 4px; background: #30343d; display: grid; grid-template-columns: 30px 104px 44px; align-items: center; padding-left: 13px; color: #f8f8f8; font-size: 12px; }
.knb { position: absolute; left: 1067px; top: 8px; display: flex; gap: 4px; }
.knb-cn { font: 900 20px "Noto Sans CJK SC", sans-serif; fill: #2b2f38; }
.knb-en { font: bold 13px "Liberation Sans", sans-serif; fill: #2b2f38; }
.toc { position: absolute; left: 0; top: 649px; width: 30px; height: 30px; border-radius: 0 15px 15px 0; background: #41454d; display: flex; align-items: center; padding-left: 6px; }
.corner { position: absolute; width: 120px; height: 120px; border: 0 solid #22b3b6; pointer-events: none; }
.tl { left: 0; top: 0; border-width: 6px 0 0 6px; }
.tr { right: 0; top: 0; height: 98px; border-width: 6px 6px 0 0; }
.bl { left: 0; bottom: 0; border-width: 0 0 6px 6px; }
.br { right: 0; bottom: 0; border-width: 0 6px 6px 0; }
```
